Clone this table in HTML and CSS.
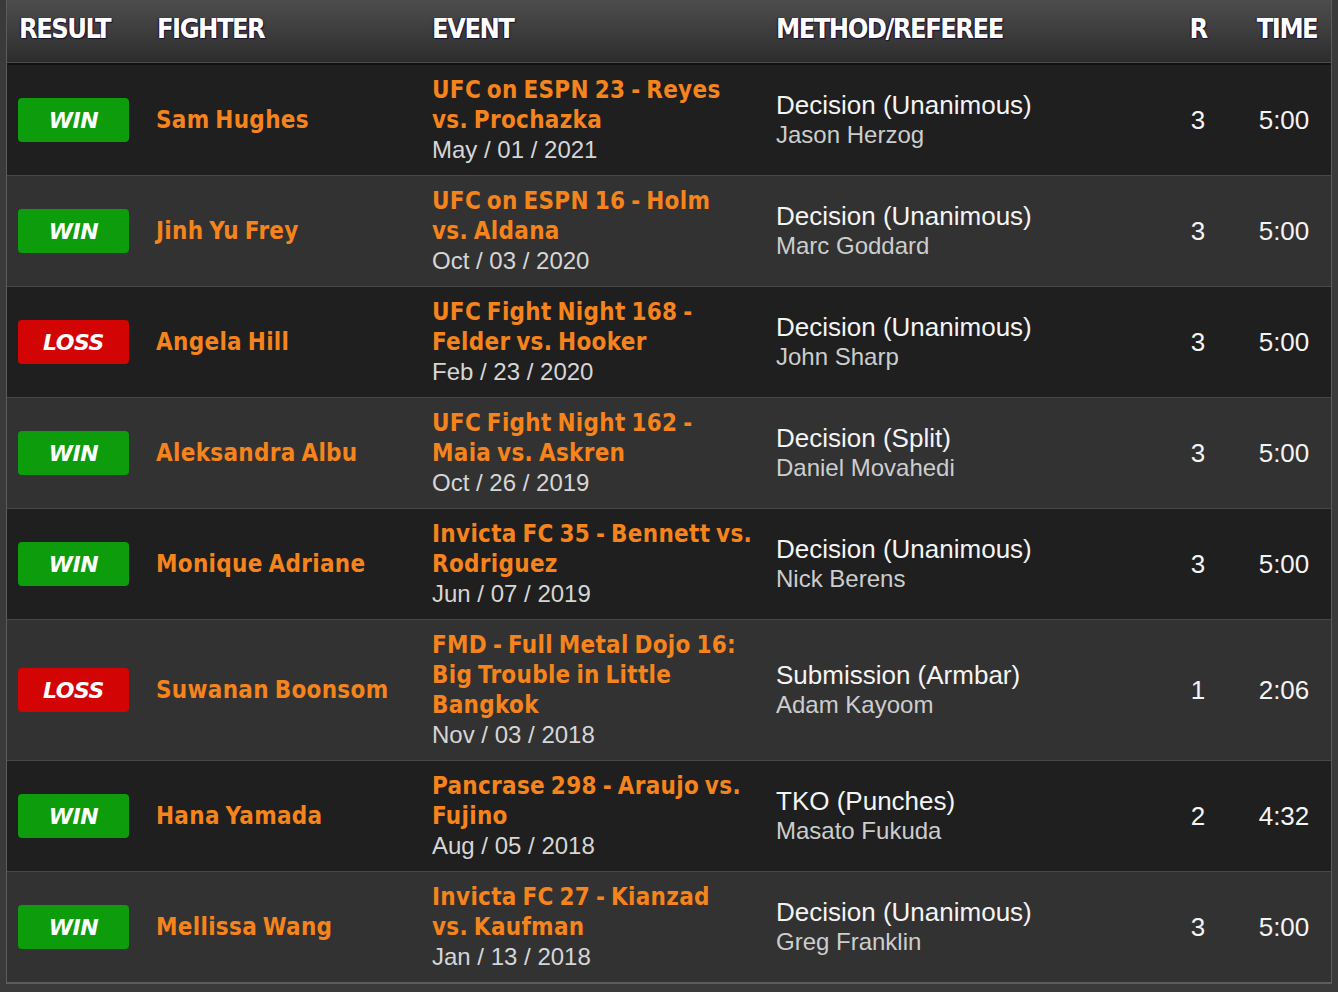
FILE: index.html
```html
<!DOCTYPE html>
<html>
<head>
<meta charset="utf-8">
<link rel="stylesheet" href="styles.css">
</head>
<body>
<div class="wrap">
<table class="fights">
  <colgroup>
    <col class="c-res"><col class="c-fighter"><col class="c-event"><col class="c-method"><col class="c-r"><col class="c-time">
  </colgroup>
  <thead>
    <tr>
      <th class="h-res">RESULT</th>
      <th>FIGHTER</th>
      <th>EVENT</th>
      <th>METHOD/REFEREE</th>
      <th class="center">R</th>
      <th class="center">TIME</th>
    </tr>
  </thead>
  <tbody>
    <tr class="odd">
      <td class="res"><span class="badge win">WIN</span></td>
      <td class="fighter">Sam Hughes</td>
      <td class="event"><div class="ev-name">UFC on ESPN 23 - Reyes<br>vs. Prochazka</div><div class="date">May / 01 / 2021</div></td>
      <td class="method"><div class="m">Decision (Unanimous)</div><div class="ref">Jason Herzog</div></td>
      <td class="num">3</td>
      <td class="num">5:00</td>
    </tr>
    <tr class="even">
      <td class="res"><span class="badge win">WIN</span></td>
      <td class="fighter">Jinh Yu Frey</td>
      <td class="event"><div class="ev-name">UFC on ESPN 16 - Holm<br>vs. Aldana</div><div class="date">Oct / 03 / 2020</div></td>
      <td class="method"><div class="m">Decision (Unanimous)</div><div class="ref">Marc Goddard</div></td>
      <td class="num">3</td>
      <td class="num">5:00</td>
    </tr>
    <tr class="odd">
      <td class="res"><span class="badge loss">LOSS</span></td>
      <td class="fighter">Angela Hill</td>
      <td class="event"><div class="ev-name">UFC Fight Night 168 -<br>Felder vs. Hooker</div><div class="date">Feb / 23 / 2020</div></td>
      <td class="method"><div class="m">Decision (Unanimous)</div><div class="ref">John Sharp</div></td>
      <td class="num">3</td>
      <td class="num">5:00</td>
    </tr>
    <tr class="even">
      <td class="res"><span class="badge win">WIN</span></td>
      <td class="fighter">Aleksandra Albu</td>
      <td class="event"><div class="ev-name">UFC Fight Night 162 -<br>Maia vs. Askren</div><div class="date">Oct / 26 / 2019</div></td>
      <td class="method"><div class="m">Decision (Split)</div><div class="ref">Daniel Movahedi</div></td>
      <td class="num">3</td>
      <td class="num">5:00</td>
    </tr>
    <tr class="odd">
      <td class="res"><span class="badge win">WIN</span></td>
      <td class="fighter">Monique Adriane</td>
      <td class="event"><div class="ev-name">Invicta FC 35 - Bennett vs.<br>Rodriguez</div><div class="date">Jun / 07 / 2019</div></td>
      <td class="method"><div class="m">Decision (Unanimous)</div><div class="ref">Nick Berens</div></td>
      <td class="num">3</td>
      <td class="num">5:00</td>
    </tr>
    <tr class="even">
      <td class="res"><span class="badge loss">LOSS</span></td>
      <td class="fighter">Suwanan Boonsom</td>
      <td class="event"><div class="ev-name">FMD - Full Metal Dojo 16:<br>Big Trouble in Little<br>Bangkok</div><div class="date">Nov / 03 / 2018</div></td>
      <td class="method"><div class="m">Submission (Armbar)</div><div class="ref">Adam Kayoom</div></td>
      <td class="num">1</td>
      <td class="num">2:06</td>
    </tr>
    <tr class="odd">
      <td class="res"><span class="badge win">WIN</span></td>
      <td class="fighter">Hana Yamada</td>
      <td class="event"><div class="ev-name">Pancrase 298 - Araujo vs.<br>Fujino</div><div class="date">Aug / 05 / 2018</div></td>
      <td class="method"><div class="m">TKO (Punches)</div><div class="ref">Masato Fukuda</div></td>
      <td class="num">2</td>
      <td class="num">4:32</td>
    </tr>
    <tr class="even">
      <td class="res"><span class="badge win">WIN</span></td>
      <td class="fighter">Mellissa Wang</td>
      <td class="event"><div class="ev-name">Invicta FC 27 - Kianzad<br>vs. Kaufman</div><div class="date">Jan / 13 / 2018</div></td>
      <td class="method"><div class="m">Decision (Unanimous)</div><div class="ref">Greg Franklin</div></td>
      <td class="num">3</td>
      <td class="num">5:00</td>
    </tr>
  </tbody>
</table>
</div>
</body>
</html>
```
FILE: styles.css
```css
html, body {
  margin: 0;
  padding: 0;
  background: #3a3a3a;
}
body {
  width: 1338px;
  height: 992px;
  overflow: hidden;
}
.wrap {
  margin: 0 6px 0 6px;
  border-left: 1px solid #5c5c5c;
  border-right: 1px solid #5c5c5c;
  border-bottom: 2px solid #5c5c5c;
}
.fights {
  width: 100%;
  border-collapse: collapse;
  table-layout: fixed;
}
.c-res { width: 138px; }
.c-fighter { width: 275px; }
.c-event { width: 344px; }
.c-method { width: 395px; }
.c-r { width: 78px; }
.c-time { width: auto; }

thead tr {
  height: 64px;
  background: linear-gradient(#4d4d4d, #3c3c3c 55%, #2c2c2c);
  border-bottom: 2px solid #111;
}
th {
  font-family: "DejaVu Sans Condensed", "DejaVu Sans", sans-serif;
  font-stretch: condensed;
  font-weight: bold;
  font-size: 27px;
  letter-spacing: -1.5px;
  color: #fff;
  text-align: left;
  padding: 0 0 6px 12px;
  text-shadow: 1px 1px 1px #1a1030, -1px 0 1px #1a1030;
  white-space: nowrap;
}
th.h-res { padding-left: 12px; }
th.center { text-align: center; padding-left: 0; }
th.center:last-child { padding-left: 6px; }

tbody tr { border-top: 1px solid #474747; }
tbody tr.odd { background: #1f1f1f; }
tbody tr.even { background: #323232; }
td {
  padding: 10px 0 10px 12px;
  vertical-align: middle;
}
td.res { padding-left: 11px; }
.badge {
  display: flex;
  align-items: center;
  justify-content: center;
  width: 111px;
  height: 44px;
  border-radius: 4px;
  font-family: "DejaVu Sans", sans-serif;
  font-weight: bold;
  font-style: italic;
  font-size: 22px;
  color: #fff;
  letter-spacing: -0.5px;
}
.badge.win { background: #0c9c0c; }
.badge.loss { background: #d20404; }

.fighter, .ev-name {
  font-family: "DejaVu Sans Condensed", "DejaVu Sans", sans-serif;
  font-stretch: condensed;
  font-weight: bold;
  font-size: 24px;
  letter-spacing: 0.3px;
  word-spacing: -2px;
  color: #f5841c;
}
.fighter { padding-left: 11px; }
.ev-name { line-height: 30px; white-space: nowrap; }
.date, .ref {
  font-family: "Liberation Sans", Arial, sans-serif;
  font-size: 24px;
  line-height: 30px;
  color: #d6d6d6;
}
.ref { color: #cdcdcd; }
.m {
  font-family: "Liberation Sans", Arial, sans-serif;
  font-size: 26px;
  line-height: 30px;
  color: #f4f4f4;
}
.num {
  font-family: "Liberation Sans", Arial, sans-serif;
  font-size: 26px;
  color: #f4f4f4;
  text-align: center;
  padding-left: 0;
}
```
